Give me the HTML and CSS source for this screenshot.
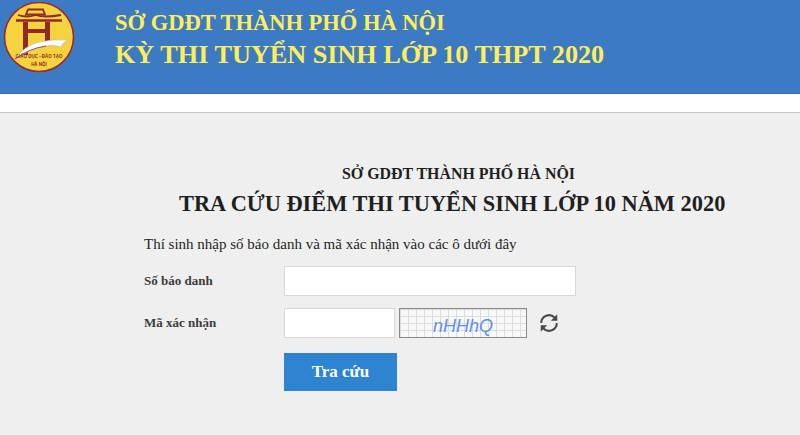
FILE: index.html
```html
<!DOCTYPE html>
<html lang="vi">
<head>
    <meta charset="UTF-8">
    <meta name="viewport" content="width=device-width, initial-scale=1.0">
    <title>Tra cứu điểm thi tuyển sinh lớp 10</title>
    <link rel="stylesheet" href="styles.css">
</head>
<body>
    <header class="banner">
        <svg class="logo" viewBox="0 0 72 72" width="72" height="72">
            <circle cx="36" cy="35" r="34.500" fill="#f5d33f" stroke="#9c2b2b" stroke-width="1.600"/>
            <path d="M25 7.500h15l2 5H23z" fill="#f5d33f" stroke="#8e2a2a" stroke-width="1.800"/>
            <path d="M15 13q9 3 17.500 0q9 3 25.500 0" fill="none" stroke="#8e2a2a" stroke-width="1.800"/>
            <path d="M13 18.500h46" fill="none" stroke="#8e2a2a" stroke-width="2.600"/>
            <path d="M20 20h5v33h-5zM42 20h5v21h-5zM25 27h17v4H25z" fill="#8e2a2a"/>
            <path d="M12 57q9-13 24-17q14-3 29-2q-5 2-7 7q-8-3-15-1q-18 4-31 13z" fill="#fff" stroke="#b5b5b5" stroke-width=".6"/>
            <path d="M12 57q15-11 31-13" fill="none" stroke="#8e2a2a" stroke-width=".8"/>
            <text x="36" y="56" class="logo-line">GIÁO DỤC - ĐÀO TẠO</text>
            <text x="36" y="64" class="logo-line">HÀ NỘI</text>
        </svg>
        <div class="banner-text">
            <div class="banner-top">SỞ GDĐT THÀNH PHỐ HÀ NỘI</div>
            <div class="banner-main">KỲ THI TUYỂN SINH LỚP 10 THPT 2020</div>
        </div>
    </header>
    <div class="strip"></div>

    <main class="content">
        <div class="dept">SỞ GDĐT THÀNH PHỐ HÀ NỘI</div>
        <h1>TRA CỨU ĐIỂM THI TUYỂN SINH LỚP 10 NĂM 2020</h1>
        <p class="hint">Thí sinh nhập số báo danh và mã xác nhận vào các ô dưới đây</p>

        <div class="row row-sbd">
            <label for="sbd">Số báo danh</label>
            <input type="text" id="sbd" class="field field-wide">
        </div>
        <div class="row row-captcha">
            <label for="captcha">Mã xác nhận</label>
            <input type="text" id="captcha" class="field field-short">
            <div class="captcha-img"><span>nHHhQ</span></div>
            <svg class="refresh" viewBox="0 0 24 24" width="22" height="22">
                <path d="M3.500 12A8.500 8.500 0 0 1 18.300 6.300" fill="none" stroke="#4a4a4a" stroke-width="2.200"/>
                <path d="M21 2.500v7h-7z" fill="#4a4a4a"/>
                <path d="M20.500 12A8.500 8.500 0 0 1 5.700 17.700" fill="none" stroke="#4a4a4a" stroke-width="2.200"/>
                <path d="M3 21.500v-7h7z" fill="#4a4a4a"/>
            </svg>
        </div>
        <div class="row row-submit">
            <button class="submit-btn">Tra cứu</button>
        </div>
    </main>
</body>
</html>
```

FILE: styles.css
```css
* {
    margin: 0;
    padding: 0;
    box-sizing: border-box;
}

body {
    height: 435px;
    overflow: hidden;
    background: #efefef;
    font-family: "Liberation Serif", "Times New Roman", serif;
    color: #1f1f1f;
}

.banner {
    height: 94px;
    background: #3d7ac4;
    border-bottom: 1px solid #2f6db5;
    display: flex;
    align-items: flex-start;
    padding: 2px 0 0 3px;
}

.logo {
    flex: none;
}

.logo-line {
    font-family: "Liberation Sans", Arial, sans-serif;
    font-size: 4.500px;
    font-weight: bold;
    fill: #8e2a2a;
    text-anchor: middle;
}

.banner-text {
    margin-left: 40px;
    padding-top: 8px;
    color: #ffee58;
    font-weight: bold;
}

.banner-top {
    font-size: 22.5px;
    line-height: 26px;
}

.banner-main {
    font-size: 26.2px;
    line-height: 30px;
    margin-top: 4px;
}

.strip {
    height: 19px;
    background: #fff;
    border-bottom: 1px solid #c4c4c4;
}

.content {
    padding-top: 52px;
}

.dept {
    font-size: 15.9px;
    font-weight: bold;
    line-height: 18px;
    padding-left: 342px;
}

h1 {
    font-size: 22.4px;
    line-height: 26px;
    margin-top: 8px;
    padding-left: 179px;
    white-space: nowrap;
}

.hint {
    font-size: 15px;
    line-height: 18px;
    margin-top: 18px;
    padding-left: 144px;
}

.row {
    display: flex;
    align-items: center;
    padding-left: 144px;
}

.row label {
    width: 140px;
    flex: none;
    font-size: 13px;
    font-weight: bold;
    color: #3c3c3c;
}

.row-sbd {
    margin-top: 13px;
}

.row-captcha {
    margin-top: 12px;
}

.row-submit {
    margin-top: 15px;
    padding-left: 284px;
}

.field {
    height: 30px;
    background: #fff;
    border: 1px solid #d8d8d8;
}

.field-wide {
    width: 292px;
}

.field-short {
    width: 111px;
}

.captcha-img {
    width: 128px;
    height: 30px;
    margin-left: 4px;
    border: 1px solid #8a8a8a;
    background-color: #f8f8f8;
    background-image:
        linear-gradient(#dcdcdc 1px, transparent 1px),
        linear-gradient(90deg, #dcdcdc 1px, transparent 1px);
    background-size: 8px 7px;
    display: flex;
    align-items: center;
    justify-content: center;
}

.captcha-img span {
    font-family: "Liberation Sans", Arial, sans-serif;
    font-style: italic;
    font-size: 18px;
    color: #5f90e8;
    padding-top: 6px;
}

.refresh {
    margin-left: 11px;
}

.submit-btn {
    width: 113px;
    height: 38px;
    background: #2e84d0;
    color: #fff;
    border: none;
    font-family: inherit;
    font-size: 17px;
    font-weight: bold;
    cursor: pointer;
}
```
